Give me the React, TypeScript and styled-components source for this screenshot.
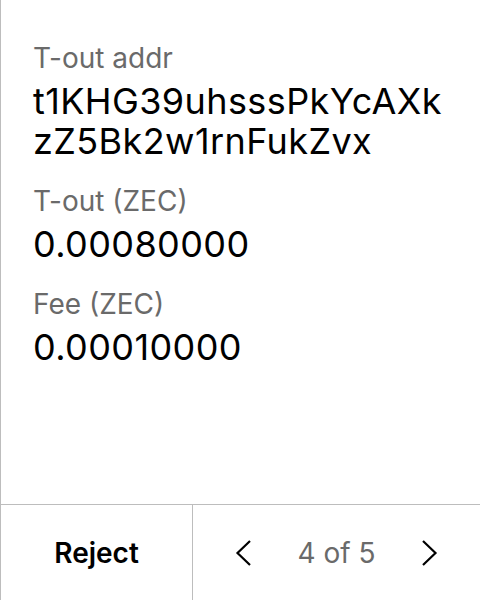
import React from "react";
import styled, { createGlobalStyle } from "styled-components";

const Global = createGlobalStyle`
  html, body { margin: 0; padding: 0; background: #ffffff; }
  * { box-sizing: border-box; }
`;

const Screen = styled.div`
  width: 480px;
  height: 600px;
  display: flex;
  flex-direction: column;
  background: #ffffff;
  border-left: 1px solid #bdbdbd;
  font-family: Inter, "Noto Sans", sans-serif;
  color: #000000;
`;

const Content = styled.div`
  flex: 1;
  display: flex;
  flex-direction: column;
  gap: 22px;
  padding: 40px 32px 0 32px;
`;

const Field = styled.div`
  display: flex;
  flex-direction: column;
  gap: 5px;
`;

const Label = styled.div`
  font-size: 28px;
  line-height: 36px;
  color: #6a6a6a;
`;

const Value = styled.div`
  font-size: 36px;
  line-height: 40px;
  letter-spacing: 0.4px;
  word-break: break-all;
`;

const Footer = styled.div`
  height: 96px;
  display: flex;
  border-top: 1px solid #bdbdbd;
`;

const RejectButton = styled.div`
  width: 192px;
  display: flex;
  align-items: center;
  justify-content: center;
  font-size: 28px;
  font-weight: 600;
  border-right: 1px solid #bdbdbd;
`;

const Nav = styled.div`
  flex: 1;
  display: flex;
  align-items: center;
  justify-content: space-between;
  padding: 0 42px;
`;

const PageText = styled.div`
  font-size: 28px;
  color: #6a6a6a;
`;

const Chevron = ({ dir }: { dir: "left" | "right" }) => (
  <svg width="16" height="26" viewBox="0 0 16 26">
    <path
      d={dir === "left" ? "M15 1 L2.5 13 L15 25" : "M1 1 L13.5 13 L1 25"}
      fill="none"
      stroke="#000"
      strokeWidth="2.2"
    />
  </svg>
);

export default function App() {
  return (
    <>
      <Global />
      <Screen>
        <Content>
          <Field>
            <Label>T-out addr</Label>
            <Value>t1KHG39uhsssPkYcAXkzZ5Bk2w1rnFukZvx</Value>
          </Field>
          <Field>
            <Label>T-out (ZEC)</Label>
            <Value>0.00080000</Value>
          </Field>
          <Field>
            <Label>Fee (ZEC)</Label>
            <Value>0.00010000</Value>
          </Field>
        </Content>
        <Footer>
          <RejectButton>Reject</RejectButton>
          <Nav>
            <Chevron dir="left" />
            <PageText>4 of 5</PageText>
            <Chevron dir="right" />
          </Nav>
        </Footer>
      </Screen>
    </>
  );
}
